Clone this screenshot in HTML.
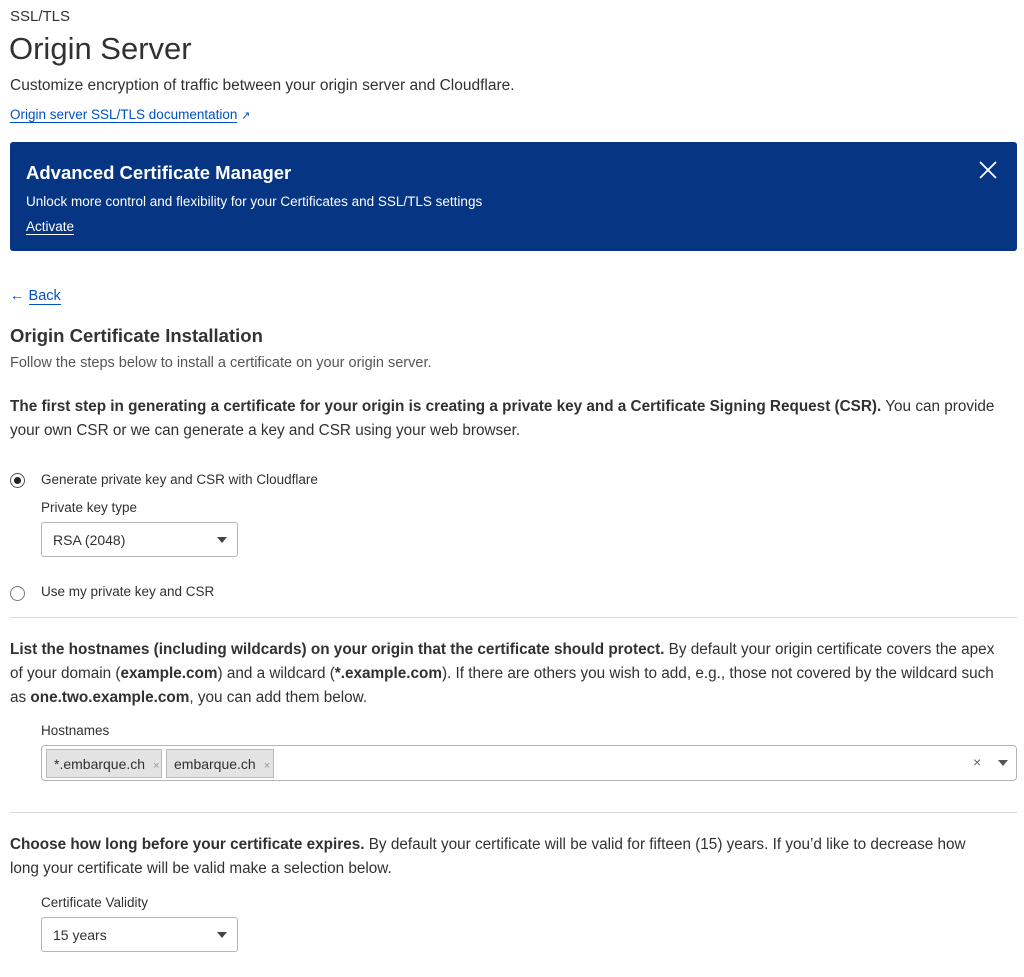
<!DOCTYPE html>
<html><head><meta charset="utf-8"><style>
*{box-sizing:border-box;margin:0;padding:0}
body{width:1024px;height:977px;background:#fff;font-family:"Liberation Sans",sans-serif;color:#313131;position:relative;overflow:hidden}
.a{position:absolute;white-space:nowrap}
.t{font-size:15.3px}
a{color:#0051c3;text-decoration:none;border-bottom:1px solid #0051c3}
.hr{position:absolute;left:10px;width:1007px;height:1px;background:#d9d9d9}
.sel{position:absolute;left:41px;width:197px;height:35px;border:1px solid #b5b5b5;border-radius:3px;font-size:14px;padding:9px 0 0 11px}
.sel:after{content:"";position:absolute;right:10px;top:14px;border-left:5px solid transparent;border-right:5px solid transparent;border-top:6px solid #444}
.tag{position:absolute;top:749px;height:29px;background:#e3e3e3;border:1px solid #bcbcbc;font-size:14px;padding:6px 0 0 7px;color:#313131}
.tag span{color:#999;font-size:11px;margin-left:8px}
</style></head><body>
<div class="a" style="left:10px;top:8px;font-size:15px">SSL/TLS</div>
<div class="a" style="left:9px;top:31px;font-size:31px">Origin Server</div>
<div class="a" style="left:10px;top:77px;font-size:15.5px">Customize encryption of traffic between your origin server and Cloudflare.</div>
<div class="a" style="left:10px;top:107px;font-size:13.5px"><a>Origin server SSL/TLS documentation</a> <span style="color:#0051c3;font-size:11px">&#x2197;</span></div>
<div class="a" style="left:10px;top:142px;width:1007px;height:109px;background:#063583;border-radius:3px"></div>
<div class="a" style="left:26px;top:162px;font-size:18.5px;font-weight:bold;color:#fff">Advanced Certificate Manager</div>
<div class="a" style="left:26px;top:194px;font-size:13.5px;color:#fff">Unlock more control and flexibility for your Certificates and SSL/TLS settings</div>
<div class="a" style="left:26px;top:219px;font-size:13.5px;color:#fff;border-bottom:1px solid #fff;line-height:15px">Activate</div>
<svg class="a" style="left:978px;top:160px" width="20" height="20"><path d="M2 2L18 18M18 2L2 18" stroke="#fff" stroke-width="1.8"/></svg>
<div class="a" style="left:10px;top:288px;font-size:14.5px;color:#0051c3">&larr; <a>Back</a></div>
<div class="a" style="left:10px;top:325px;font-size:18.5px;font-weight:bold;color:#333">Origin Certificate Installation</div>
<div class="a" style="left:10px;top:355px;font-size:14.5px;color:#555">Follow the steps below to install a certificate on your origin server.</div>
<div class="a t" style="left:10px;top:395px;line-height:24px"><b>The first step in generating a certificate for your origin is creating a private key and a Certificate Signing Request (CSR).</b> You can provide<br>your own CSR or we can generate a key and CSR using your web browser.</div>
<div class="a" style="left:10px;top:473px;width:15px;height:15px;border:1px solid #555;border-radius:50%"><div style="margin:3px;width:7px;height:7px;border-radius:50%;background:#222"></div></div>
<div class="a" style="left:41px;top:472px;font-size:13.5px">Generate private key and CSR with Cloudflare</div>
<div class="a" style="left:41px;top:500px;font-size:13.5px">Private key type</div>
<div class="sel" style="top:522px">RSA (2048)</div>
<div class="a" style="left:10px;top:586px;width:15px;height:15px;border:1px solid #777;border-radius:50%"></div>
<div class="a" style="left:41px;top:584px;font-size:13.5px">Use my private key and CSR</div>
<div class="hr" style="top:617px"></div>
<div class="a t" style="left:10px;top:638px;line-height:24px"><b>List the hostnames (including wildcards) on your origin that the certificate should protect.</b> By default your origin certificate covers the apex<br>of your domain (<b>example.com</b>) and a wildcard (<b>*.example.com</b>). If there are others you wish to add, e.g., those not covered by the wildcard such<br>as <b>one.two.example.com</b>, you can add them below.</div>
<div class="a" style="left:41px;top:723px;font-size:13.5px">Hostnames</div>
<div class="a" style="left:41px;top:745px;width:976px;height:36px;border:1px solid #b5b5b5;border-radius:4px"></div>
<div class="tag" style="left:46px;width:116px">*.embarque.ch<span>&times;</span></div>
<div class="tag" style="left:166px;width:108px">embarque.ch<span>&times;</span></div>
<div class="a" style="left:973px;top:754px;font-size:14px;color:#666">&times;</div>
<div class="a" style="left:998px;top:760px;border-left:5px solid transparent;border-right:5px solid transparent;border-top:6px solid #555"></div>
<div class="hr" style="top:812px"></div>
<div class="a t" style="left:10px;top:833px;line-height:24px"><b>Choose how long before your certificate expires.</b> By default your certificate will be valid for fifteen (15) years. If you’d like to decrease how<br>long your certificate will be valid make a selection below.</div>
<div class="a" style="left:41px;top:895px;font-size:13.5px">Certificate Validity</div>
<div class="sel" style="top:917px">15 years</div>
</body></html>
